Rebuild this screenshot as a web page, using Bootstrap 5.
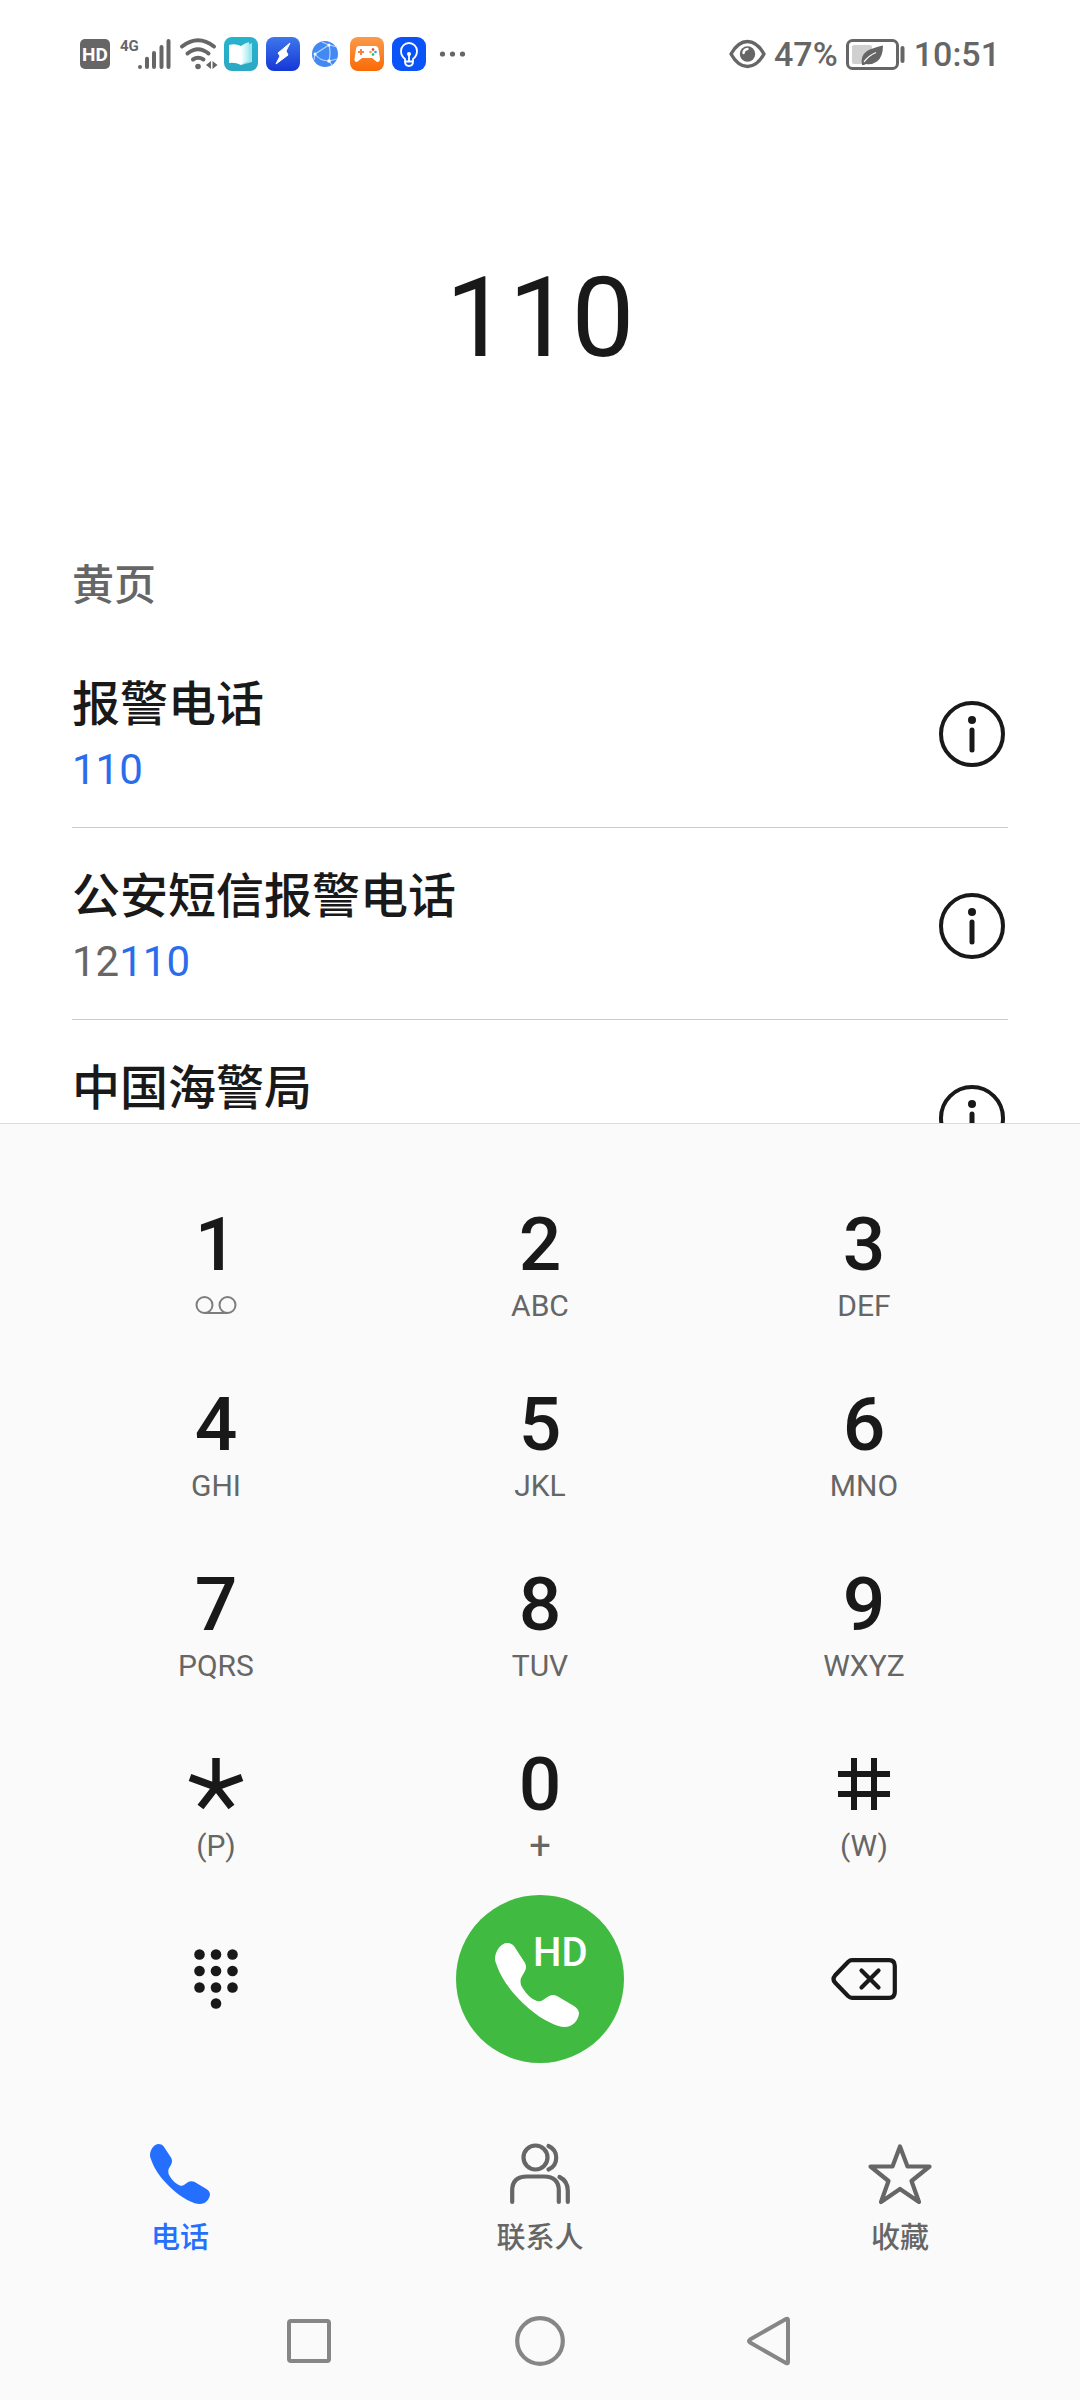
<!DOCTYPE html>
<html lang="zh-CN">
<head>
<meta charset="utf-8">
<meta name="viewport" content="width=device-width, initial-scale=1">
<title>电话</title>
<link href="https://cdn.jsdelivr.net/npm/bootstrap@5.3.0/dist/css/bootstrap.min.css" rel="stylesheet">
<style>
  :root { --ink: #191919; --soft: #666; --accent: #256fff; --panel: #fafafa; }
  body { font-family: Roboto, "Noto Sans CJK SC", sans-serif; color: var(--ink); background: #fff; }
  svg { display: block; flex: none; overflow: visible; }
  .btn { --bs-btn-color: var(--ink); --bs-btn-padding-x: 0; --bs-btn-padding-y: 0; --bs-btn-border-width: 0; }
  .status-bar { padding: 36px 80px; color: var(--soft); font-size: 34px; line-height: 36px; font-weight: 500; }
  .status-bar .cluster { gap: 8px; }
  .dialed { font-size: 112px; line-height: 132px; padding: 143px 48px 171px; color: var(--ink); }
  .results { padding: 0 72px; }
  .section-title { font-size: 42px; line-height: 60px; margin: 0 0 20px; color: var(--soft); font-weight: 500; }
  .entry { padding: 37px 0 29px; border-bottom: 1px solid #ccc; }
  .entry-name { font-size: 48px; line-height: 64px; font-weight: 500; margin: 0 0 5px; }
  .entry-number { font-size: 42px; line-height: 56px; color: var(--soft); }
  .hit { color: #2a6cec; }
  .info-btn { margin: 0 3px 4px 0; }
  .panel { background: var(--panel); border-top: 1px solid #dcdcdc; padding-top: 51px; }
  .keys { padding: 0 54px; }
  .key { padding: 31px 0; border-radius: 24px; }
  .key-digit { font-size: 75px; line-height: 76px; height: 76px; font-weight: 500; margin-bottom: 6px; }
  .key-sub { font-size: 30px; line-height: 36px; height: 36px; color: var(--soft); }
  .key-plus { font-size: 38px; }
  .call-btn { width: 168px; height: 168px; border-radius: 50%; background: #41ba41; color: #fff; }
  .tabs { padding-top: 81px; }
  .tab { color: var(--soft); font-size: 29px; line-height: 36px; font-weight: 500; gap: 16px; text-decoration: none; }
  .tab.active { color: var(--accent); }
  .sys-nav { padding: 60px 0 34px; gap: 181px; }
  .sys-nav .btn { --bs-btn-color: #868686; }
</style>
</head>
<body>
<svg width="0" height="0" class="position-absolute" aria-hidden="true">
  <defs>
    <path id="handset" d="M0 16C0 8 6 0 12 0C15 0 17 1 19 3L30 20Q32 24 30 28L26 35Q25 38 26 42C30 50 36 56 42 58Q45 59 48 57L54 53Q58 51 62 53L79 63Q84 66 84 71C83 78 77 84 70 84C65 84 60 82 56 80C36 71 10 46 2 23C1 20 0 18 0 16Z"/>
    <g id="info">
      <circle cx="33" cy="33" r="31" fill="none" stroke="#191919" stroke-width="4"/>
      <circle cx="33" cy="19" r="4"/>
      <path d="M33 29V49" stroke="#191919" stroke-width="5" stroke-linecap="round"/>
    </g>
    <linearGradient id="gBolt" x2="0" y2="1"><stop stop-color="#3e77ec"/><stop offset="1" stop-color="#1537d6"/></linearGradient>
    <linearGradient id="gGame" x2="0" y2="1"><stop stop-color="#fb9a4b"/><stop offset="1" stop-color="#f96a06"/></linearGradient>
    <linearGradient id="gBook" x2="0" y2="1"><stop stop-color="#27b3cd"/><stop offset="1" stop-color="#2ba8c4"/></linearGradient>
    <linearGradient id="gPage" x2="1"><stop stop-color="#fff"/><stop offset="1" stop-color="#a9ecf2"/></linearGradient>
  </defs>
</svg>

<div class="vh-100 d-flex flex-column overflow-hidden">
  <header class="status-bar d-flex justify-content-between align-items-center">
    <div class="cluster d-flex align-items-center">
      <svg width="30" height="34" viewBox="0 0 30 34" role="img" aria-label="HD">
        <rect y="2" width="30" height="30" rx="5" fill="#666"/>
        <text x="15" y="24" text-anchor="middle" font-size="19" font-weight="700" fill="#fff">HD</text>
      </svg>
      <svg width="54" height="34" viewBox="0 0 54 34" role="img" aria-label="4G" fill="#666">
        <text x="2" y="14" font-size="15" font-weight="700">4G</text>
        <path d="M22 30V30.100M29 21.700V30M36 16V30M43.500 10V30M50.500 4V30" stroke="#666" stroke-width="4" stroke-linecap="round"/>
      </svg>
      <svg width="36" height="34" viewBox="0 0 36 34" fill="none" stroke="#666" stroke-width="4" stroke-linecap="round" aria-hidden="true">
        <path d="M2 9.500Q18-3 34 9.500M7.500 16.500Q18 8 28.500 16.500M13 22.500Q18 19 23.500 22.500"/>
        <circle cx="18" cy="29.500" r="2.800" fill="#666" stroke="none"/>
        <path d="M26 28L31 24V32ZM32.500 24L37.500 28L32.500 32Z" fill="#666" stroke="none"/>
      </svg>
      <svg width="34" height="34" viewBox="0 0 34 34" aria-hidden="true">
        <rect width="34" height="34" rx="8" fill="url(#gBook)"/>
        <path d="M20 9L28 6V25L17 28Z" fill="#9fe5ee"/>
        <path d="M5 8Q11 6 17 9V28Q11 25 5 26Z" fill="#fff"/>
        <path d="M17 9Q21 6 25 5V24Q20 25 17 28Z" fill="url(#gPage)"/>
      </svg>
      <svg width="34" height="34" viewBox="0 0 34 34" aria-hidden="true">
        <rect width="34" height="34" rx="8" fill="url(#gBolt)"/>
        <path d="M24 6L12 16L14 19L10 27L22 18L20 14Z" fill="#fff" stroke="#fff" stroke-linejoin="round"/>
      </svg>
      <svg width="34" height="34" viewBox="0 0 34 34" aria-hidden="true">
        <circle cx="17" cy="17" r="13" fill="#4389f3"/>
        <path d="M7 17L21 8Q23 16 21 24Q12 24 7 17M14 5L21 8L29 10M7 17L6 23M21 24L24 28M21 24L29 22" fill="none" stroke="#b8d5ff" stroke-width="1.200"/>
        <circle cx="7" cy="17" r="1.500" fill="#fff"/><circle cx="21" cy="8" r="1.500" fill="#fff"/><circle cx="21" cy="24" r="1.800" fill="#fff"/>
      </svg>
      <svg width="34" height="34" viewBox="0 0 34 34" aria-hidden="true">
        <rect width="34" height="34" rx="8" fill="url(#gGame)"/>
        <path d="M9 9H25Q28 9 28.500 12L30 22Q30 25 27 25L22 21H12L7 25Q4 25 4.500 22L6 12Q6.500 9 9 9Z" fill="#fff"/>
        <path d="M11 12V18M8 15H14" stroke="#f98040" stroke-width="2"/>
        <circle cx="23" cy="12.500" r="1.300" fill="#e33"/><circle cx="20.500" cy="15" r="1.300" fill="#f5a623"/><circle cx="25.500" cy="15" r="1.300" fill="#29a3e0"/><circle cx="23" cy="17.500" r="1.300" fill="#2db36a"/>
      </svg>
      <svg width="34" height="34" viewBox="0 0 34 34" aria-hidden="true">
        <rect width="34" height="34" rx="9" fill="#0a53f8"/>
        <path d="M13 24.500V22Q9 19 9 14A8 8 0 0 1 25 14Q25 19 21 22V24.500ZM13 24.500Q13 29 17 29Q21 29 21 24.500M17 17V24" fill="none" stroke="#fff" stroke-width="1.800"/>
        <circle cx="17" cy="17" r="2" fill="#fff"/>
      </svg>
      <svg width="34" height="34" viewBox="0 0 34 34" fill="#666" aria-hidden="true"><circle cx="8.500" cy="17" r="2.600"/><circle cx="18.500" cy="17" r="2.600"/><circle cx="28.500" cy="17" r="2.600"/></svg>
    </div>
    <div class="cluster d-flex align-items-center">
      <svg width="37" height="34" viewBox="0 0 37 34" aria-hidden="true">
        <path d="M2 17Q9 4.500 18.500 4.500Q28 4.500 35 17Q28 29.500 18.500 29.500Q9 29.500 2 17Z" fill="none" stroke="#666" stroke-width="3.400" stroke-linejoin="round"/>
        <circle cx="18.500" cy="17" r="7.700" fill="#666"/><path d="M14.500 16A4.500 4.500 0 0 1 18.500 12" stroke="#fff" stroke-width="2.400" fill="none" stroke-linecap="round"/>
      </svg>
      <span>47%</span>
      <svg width="60" height="34" viewBox="0 0 60 34" aria-hidden="true">
        <rect x="1.500" y="3.500" width="50" height="28" rx="5" fill="none" stroke="#666" stroke-width="3"/>
        <rect x="6" y="8" width="20" height="19" rx="2" fill="#d0d0d0"/>
        <path d="M16 28Q14 19 21 14Q26 11 37 8.500Q37 20 31 24.500Q26 28 20 27L18 28Z" fill="#666"/>
        <path d="M18 25Q22 19 30 15.500" stroke="#fff" stroke-width="1.300" fill="none"/>
        <path d="M56.500 11V24" stroke="#666" stroke-width="4" stroke-linecap="round"/>
      </svg>
      <time datetime="10:51">10:51</time>
    </div>
  </header>

  <input class="dialed form-control-plaintext text-center" type="text" inputmode="tel" value="110" aria-label="号码" readonly>

  <main class="results flex-fill overflow-hidden">
    <h1 class="section-title">黄页</h1>
    <div class="entry d-flex justify-content-between align-items-center">
      <div>
        <h2 class="entry-name">报警电话</h2>
        <div class="entry-number"><span class="hit">110</span></div>
      </div>
      <button type="button" class="btn info-btn" aria-label="详情"><svg width="66" height="66" viewBox="0 0 66 66" fill="#191919"><use href="#info"/></svg></button>
    </div>
    <div class="entry d-flex justify-content-between align-items-center">
      <div>
        <h2 class="entry-name">公安短信报警电话</h2>
        <div class="entry-number">12<span class="hit">110</span></div>
      </div>
      <button type="button" class="btn info-btn" aria-label="详情"><svg width="66" height="66" viewBox="0 0 66 66" fill="#191919"><use href="#info"/></svg></button>
    </div>
    <div class="entry d-flex justify-content-between align-items-center">
      <div>
        <h2 class="entry-name">中国海警局</h2>
        <div class="entry-number">&nbsp;</div>
      </div>
      <button type="button" class="btn info-btn" aria-label="详情"><svg width="66" height="66" viewBox="0 0 66 66" fill="#191919"><use href="#info"/></svg></button>
    </div>
  </main>

  <section class="panel flex-shrink-0">
    <div class="keys">
      <div class="row g-0">
        <div class="col-4"><button type="button" class="btn key w-100">
          <div class="key-digit">1</div>
          <div class="key-sub d-flex justify-content-center align-items-center"><svg width="42" height="20" viewBox="0 0 42 20" fill="none" stroke="#7d7d7d" stroke-width="2" aria-label="语音信箱"><circle cx="9.500" cy="9" r="8"/><circle cx="32.500" cy="9" r="8"/><path d="M9.500 17H32.500"/></svg></div>
        </button></div>
        <div class="col-4"><button type="button" class="btn key w-100"><div class="key-digit">2</div><div class="key-sub">ABC</div></button></div>
        <div class="col-4"><button type="button" class="btn key w-100"><div class="key-digit">3</div><div class="key-sub">DEF</div></button></div>
        <div class="col-4"><button type="button" class="btn key w-100"><div class="key-digit">4</div><div class="key-sub">GHI</div></button></div>
        <div class="col-4"><button type="button" class="btn key w-100"><div class="key-digit">5</div><div class="key-sub">JKL</div></button></div>
        <div class="col-4"><button type="button" class="btn key w-100"><div class="key-digit">6</div><div class="key-sub">MNO</div></button></div>
        <div class="col-4"><button type="button" class="btn key w-100"><div class="key-digit">7</div><div class="key-sub">PQRS</div></button></div>
        <div class="col-4"><button type="button" class="btn key w-100"><div class="key-digit">8</div><div class="key-sub">TUV</div></button></div>
        <div class="col-4"><button type="button" class="btn key w-100"><div class="key-digit">9</div><div class="key-sub">WXYZ</div></button></div>
        <div class="col-4"><button type="button" class="btn key w-100" aria-label="星号 (P)">
          <div class="key-digit d-flex justify-content-center align-items-center"><svg width="56" height="54" viewBox="0 0 56 54" stroke="#191919" stroke-width="7.500" fill="none"><path d="M28 1V30M2 20.500L28 30L54 20.500M12.500 50L28 30L43.500 50"/></svg></div>
          <div class="key-sub">(P)</div>
        </button></div>
        <div class="col-4"><button type="button" class="btn key w-100"><div class="key-digit">0</div><div class="key-sub key-plus">+</div></button></div>
        <div class="col-4"><button type="button" class="btn key w-100" aria-label="井号 (W)">
          <div class="key-digit d-flex justify-content-center align-items-center"><svg width="54" height="54" viewBox="0 0 54 54" stroke="#191919" stroke-width="6" fill="none"><path d="M17 1V53M37 1V53M1 17H53M1 37H53"/></svg></div>
          <div class="key-sub">(W)</div>
        </button></div>
      </div>
      <div class="row g-0 align-items-center">
        <div class="col-4 d-flex justify-content-center">
          <button type="button" class="btn" aria-label="收起拨号盘"><svg width="44" height="60" viewBox="0 0 44 60" fill="#191919">
            <circle cx="5.500" cy="5.500" r="5.300"/><circle cx="22" cy="5.500" r="5.300"/><circle cx="38.500" cy="5.500" r="5.300"/>
            <circle cx="5.500" cy="22" r="5.300"/><circle cx="22" cy="22" r="5.300"/><circle cx="38.500" cy="22" r="5.300"/>
            <circle cx="5.500" cy="38.500" r="5.300"/><circle cx="22" cy="38.500" r="5.300"/><circle cx="38.500" cy="38.500" r="5.300"/>
            <circle cx="22" cy="54.500" r="5.300"/>
          </svg></button>
        </div>
        <div class="col-4 d-flex justify-content-center">
          <button type="button" class="btn call-btn" aria-label="HD 拨打"><svg width="168" height="168" viewBox="0 0 168 168" fill="#fff">
            <use href="#handset" x="39" y="48"/>
            <text x="77" y="71" font-size="40" font-weight="500">HD</text>
          </svg></button>
        </div>
        <div class="col-4 d-flex justify-content-center">
          <button type="button" class="btn" aria-label="删除"><svg width="66" height="42" viewBox="0 0 66 42" fill="none" stroke="#191919" stroke-width="4.200" stroke-linecap="round">
            <path d="M21 2.200H58Q63.800 2.200 63.800 8V34Q63.800 39.800 58 39.800H21Q19 39.800 17 38L4 24.500Q1 21 4 17.500L17 4Q19 2.200 21 2.200ZM30.500 12.500L47.500 29.500M47.500 12.500L30.500 29.500"/>
          </svg></button>
        </div>
      </div>
    </div>

    <nav class="tabs row g-0" aria-label="主导航">
      <a class="tab active col-4 d-flex flex-column align-items-center" href="#" aria-current="page"><svg width="60" height="60" viewBox="0 0 84 84" fill="#256fff"><use href="#handset"/></svg>电话</a>
      <a class="tab col-4 d-flex flex-column align-items-center" href="#"><svg width="60" height="60" viewBox="0 0 60 60" fill="none" stroke="#666" stroke-width="4.200" stroke-linecap="round">
        <circle cx="25.500" cy="13.500" r="12"/><path d="M38.500 2A12.800 12.800 0 0 1 38.500 25.500M2.200 58V46.500Q2.200 32.500 17 32.500H34Q48.800 32.500 48.800 46.500V58M49.500 33Q57.800 37 57.800 47V58"/></svg>联系人</a>
      <a class="tab col-4 d-flex flex-column align-items-center" href="#"><svg width="64" height="60" viewBox="0 0 64 60" fill="none" stroke="#666" stroke-width="4.200" stroke-linejoin="round"><path d="M32 2.500L39.500 22.500L61.500 22.500L43.500 37L51 58L32 45L13 58L20.500 37L2.500 22.500L24.500 22.500Z"/></svg>收藏</a>
    </nav>

    <div class="sys-nav d-flex justify-content-center">
      <button type="button" class="btn" aria-label="最近任务"><svg width="50" height="50" viewBox="0 0 50 50" fill="none" stroke="currentColor" stroke-width="4"><rect x="5" y="5" width="40" height="40" rx="2"/></svg></button>
      <button type="button" class="btn" aria-label="主屏幕"><svg width="50" height="50" viewBox="0 0 50 50" fill="none" stroke="currentColor" stroke-width="4.200"><circle cx="25" cy="25" r="22.800"/></svg></button>
      <button type="button" class="btn" aria-label="返回"><svg width="50" height="50" viewBox="0 0 50 50" fill="none" stroke="currentColor" stroke-width="4" stroke-linejoin="round"><path d="M42 4V46Q42 48 40 47L4 26.500Q2 25 4 23.500L40 3Q42 2 42 4Z"/></svg></button>
    </div>
  </section>
</div>
<script src="https://cdn.jsdelivr.net/npm/bootstrap@5.3.0/dist/js/bootstrap.bundle.min.js"></script>
</body>
</html>
